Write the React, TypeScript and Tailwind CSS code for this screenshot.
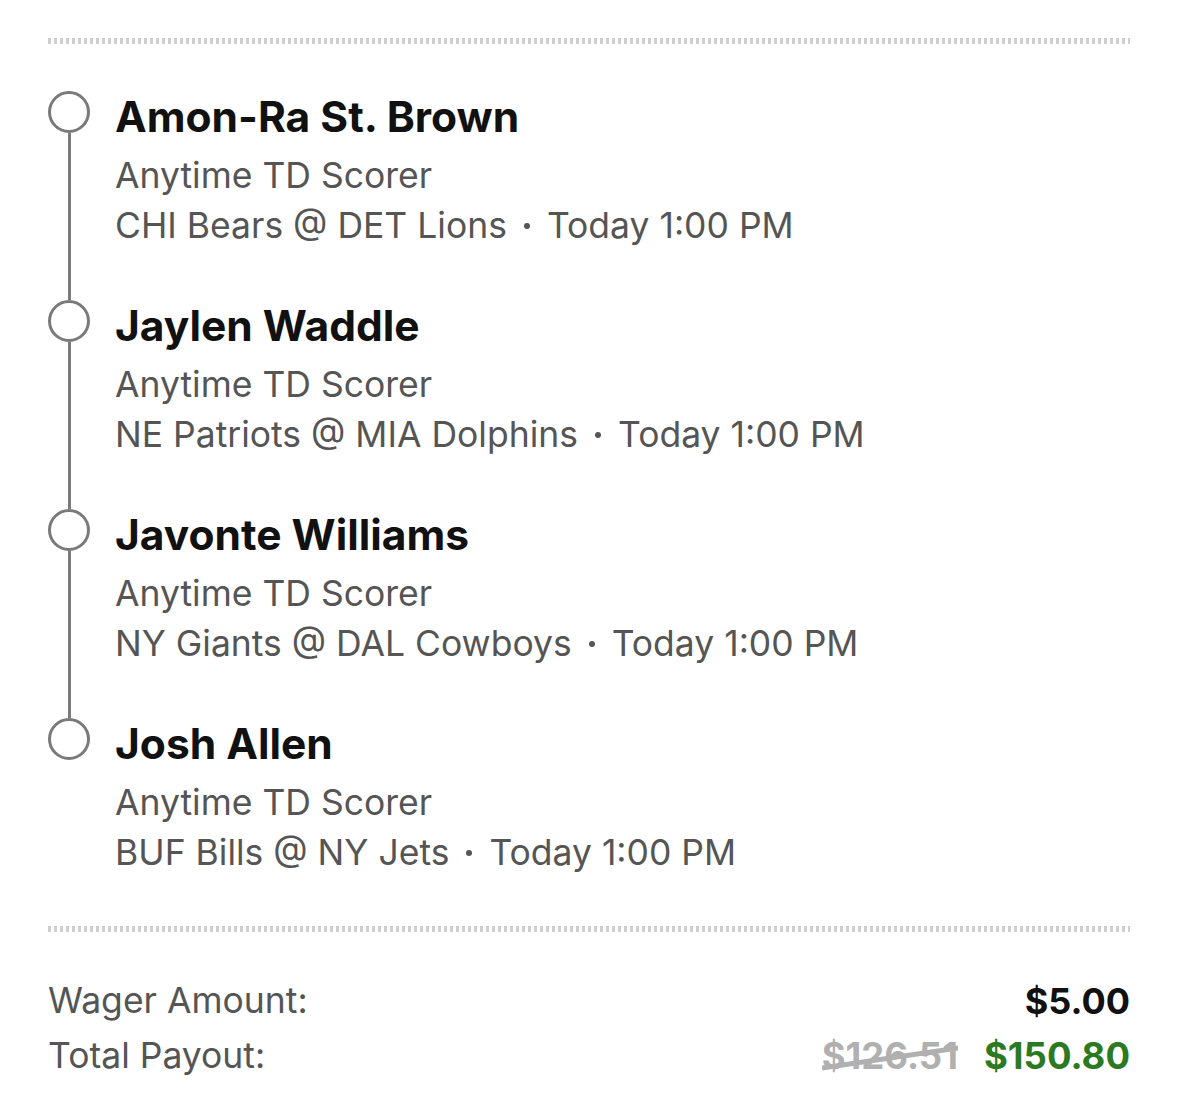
import React from "react";

type Leg = {
  player: string;
  market: string;
  game: string;
  time: string;
};

const legs: Leg[] = [
  { player: "Amon-Ra St. Brown", market: "Anytime TD Scorer", game: "CHI Bears @ DET Lions", time: "Today 1:00 PM" },
  { player: "Jaylen Waddle", market: "Anytime TD Scorer", game: "NE Patriots @ MIA Dolphins", time: "Today 1:00 PM" },
  { player: "Javonte Williams", market: "Anytime TD Scorer", game: "NY Giants @ DAL Cowboys", time: "Today 1:00 PM" },
  { player: "Josh Allen", market: "Anytime TD Scorer", game: "BUF Bills @ NY Jets", time: "Today 1:00 PM" },
];

const Dotted = () => (
  <div className="h-[6px] w-full bg-[repeating-linear-gradient(90deg,#cfcfcf_0_3px,transparent_3px_6px)]" />
);

const LegRow: React.FC<{ leg: Leg; last: boolean }> = ({ leg, last }) => (
  <div className="flex">
    {/* timeline */}
    <div className="flex w-[42px] shrink-0 flex-col items-center">
      <div className="h-[42px] w-[42px] rounded-full border-[3px] border-[#7a7a7a]" />
      {!last && <div className="w-[3px] flex-1 bg-[#7a7a7a]" />}
    </div>
    <div className={`ml-[25px] ${last ? "" : "pb-[49px]"}`}>
      <div className="text-[42.5px] font-bold leading-[52px] text-[#111111]">{leg.player}</div>
      <div className="mt-[8px] text-[35.5px] leading-[50px] text-[#555555]">{leg.market}</div>
      <div className="flex items-center text-[35.5px] leading-[50px] text-[#555555]">
        <span>{leg.game}</span>
        <span className="mx-[17px] h-[6px] w-[6px] rounded-full bg-[#555555]" />
        <span>{leg.time}</span>
      </div>
    </div>
  </div>
);

export default function App() {
  return (
    <div className="min-h-[1110px] w-[1178px] bg-white px-[48px] pt-[38px] font-['Inter','Noto_Sans',sans-serif]">
      <Dotted />

      <div className="mt-[47px]">
        {legs.map((leg, i) => (
          <LegRow key={leg.player} leg={leg} last={i === legs.length - 1} />
        ))}
      </div>

      <div className="mt-[48px]">
        <Dotted />
      </div>

      {/* totals */}
      <div className="mt-[44px] flex items-center justify-between leading-[50px]">
        <span className="text-[35.5px] text-[#555555]">Wager Amount:</span>
        <span className="text-[36px] font-bold text-[#111111]">$5.00</span>
      </div>
      <div className="mt-[5px] flex items-center justify-between leading-[50px]">
        <span className="text-[35.5px] text-[#555555]">Total Payout:</span>
        <div className="flex items-center gap-[26px] text-[36.5px] font-bold">
          <span className="relative text-[#b0b0b0]">
            $126.51
            <svg className="absolute inset-0 h-full w-full" viewBox="0 0 140 50" preserveAspectRatio="none">
              <line x1="0" y1="37" x2="140" y2="17" stroke="#b0b0b0" strokeWidth="5" />
            </svg>
          </span>
          <span className="text-[#2b7a22]">$150.80</span>
        </div>
      </div>
    </div>
  );
}
